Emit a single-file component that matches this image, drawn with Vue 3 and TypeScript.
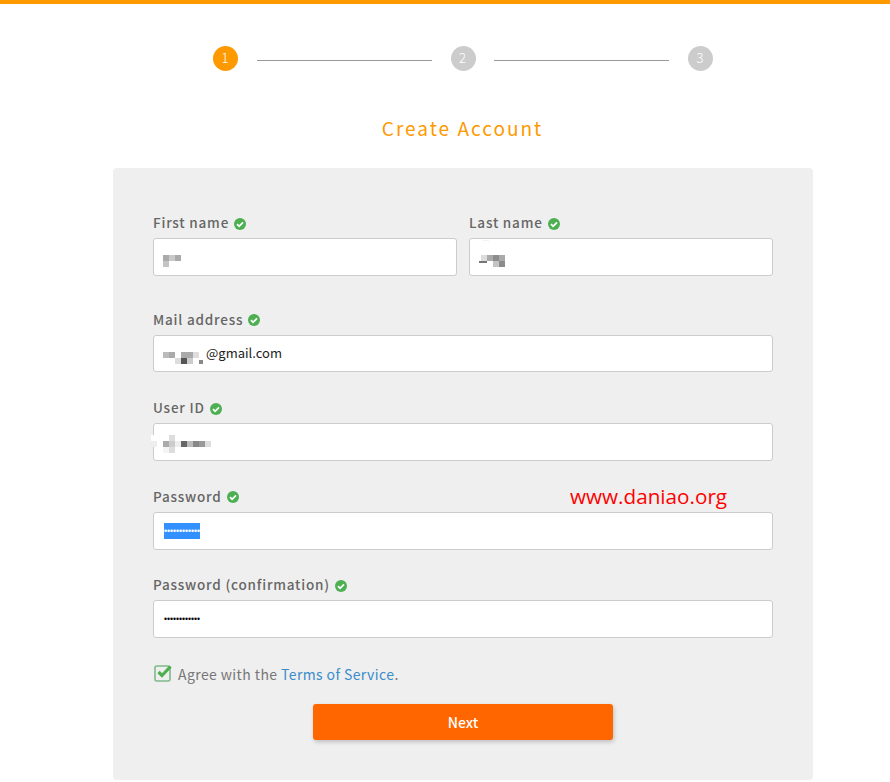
<template>
  <div class="page">
    <div class="top-bar"></div>
    <main class="wrapper">
      <div class="stepper">
        <template v-for="(step, i) in steps" :key="step">
          <span class="step" :class="{ active: i === 0 }">{{ step }}</span>
          <span v-if="i < steps.length - 1" class="step-line"></span>
        </template>
      </div>

      <h1 class="title">Create Account</h1>

      <form class="card" @submit.prevent>
        <span class="watermark">www.daniao.org</span>

        <div class="fields">
          <div v-for="field in fields" :key="field.label" class="field" :class="{ half: field.half }">
            <label class="field-label">
              {{ field.label }}
              <svg class="ok" width="12" height="12" viewBox="0 0 12 12">
                <circle cx="6" cy="6" r="6" fill="#4caf50" />
                <path d="M3 6.2 5.1 8.3 9 4.3" fill="none" stroke="#fff" stroke-width="1.8" />
              </svg>
            </label>
            <div class="input">
              <svg v-if="field.blur" class="blur" :width="field.blurWidth" height="36">
                <rect
                  v-for="(c, n) in field.blur"
                  :key="n"
                  :x="c[0]"
                  :y="c[1]"
                  :width="c[2]"
                  :height="c[3]"
                  :fill="c[4]"
                />
              </svg>
              <span v-if="field.text" class="value">{{ field.text }}</span>
              <span v-if="field.dots" class="dots" :class="{ selected: field.selected }">{{ field.dots }}</span>
            </div>
          </div>
        </div>

        <div class="agree">
          <svg class="checkbox" width="20" height="18" viewBox="0 0 20 18">
            <rect x="1" y="2" width="15" height="15" rx="2" fill="none" stroke="#7fb98a" stroke-width="1.6" />
            <path d="M4.5 8 8 11.5 16.5 2.5" fill="none" stroke="#4caf50" stroke-width="3.2" />
          </svg>
          <span class="agree-text">Agree with the <a class="terms" href="#">Terms of Service</a>.</span>
        </div>

        <button class="next" type="submit">Next</button>
      </form>
    </main>
  </div>
</template>

<script setup lang="ts">
type Cell = [number, number, number, number, string]

interface Field {
  label: string
  half?: boolean
  text?: string
  dots?: string
  selected?: boolean
  blur?: Cell[]
  blurWidth?: number
}

const steps = [1, 2, 3]
const dots = '••••••••••••'

const fields: Field[] = [
  {
    label: 'First name',
    half: true,
    blurWidth: 18,
    blur: [
      [0, 16, 6, 6, '#aaa'],
      [6, 16, 6, 6, '#c8c8c8'],
      [12, 16, 6, 6, '#aaa'],
      [0, 22, 6, 6, '#c4c4c4'],
    ],
  },
  {
    label: 'Last name',
    half: true,
    blurWidth: 26,
    blur: [
      [4, 1, 6, 1, '#f2f2f2'],
      [2, 16, 6, 6, '#dcdcdc'],
      [8, 16, 6, 6, '#aaa'],
      [14, 16, 6, 6, '#8c8c8c'],
      [20, 16, 6, 6, '#aaa'],
      [0, 22, 8, 2, '#777'],
      [14, 22, 6, 6, '#c4c4c4'],
      [20, 22, 6, 6, '#8c8c8c'],
    ],
  },
  {
    label: 'Mail address',
    text: '@gmail.com',
    blurWidth: 43,
    blur: [
      [0, 16, 6, 6, '#bbb'],
      [6, 16, 6, 6, '#aaa'],
      [18, 16, 12, 6, '#aaa'],
      [30, 16, 6, 6, '#ddd'],
      [12, 22, 6, 6, '#ddd'],
      [18, 22, 6, 6, '#555'],
      [24, 22, 6, 6, '#ccc'],
      [36, 24, 4, 4, '#888'],
    ],
  },
  {
    label: 'User ID',
    blurWidth: 48,
    blur: [
      [-12, 11, 6, 12, '#fff'],
      [-12, 17, 6, 6, '#eee'],
      [6, 11, 6, 6, '#ddd'],
      [0, 17, 6, 6, '#aaa'],
      [6, 17, 6, 6, '#ccc'],
      [12, 17, 6, 6, '#eee'],
      [18, 17, 6, 6, '#666'],
      [24, 17, 6, 6, '#bbb'],
      [30, 17, 6, 6, '#888'],
      [36, 17, 6, 6, '#999'],
      [42, 17, 6, 6, '#ddd'],
      [0, 23, 6, 6, '#f4f4f4'],
      [6, 23, 6, 6, '#ddd'],
    ],
  },
  { label: 'Password', dots, selected: true },
  { label: 'Password (confirmation)', dots },
]
</script>

<style scoped>
.page {
  font-family: "Noto Sans CJK JP", "Noto Sans", sans-serif;
  color: #666;
}

.top-bar {
  height: 4px;
  background: #f90;
}

.wrapper {
  width: 700px;
  margin-left: 113px;
}

.stepper {
  display: flex;
  justify-content: space-between;
  align-items: center;
  width: 500px;
  height: 25px;
  margin: 42px auto 0;
}

.step {
  display: flex;
  align-items: center;
  justify-content: center;
  box-sizing: border-box;
  width: 25px;
  height: 25px;
  padding: 0 1px 2px 0;
  border-radius: 50%;
  background: #ccc;
  color: #fff;
  font-size: 13px;
  font-weight: 300;
}

.step.active {
  background: #f90;
}

.step-line {
  width: 175px;
  height: 1px;
  margin-top: 3px;
  background: #999;
}

.title {
  margin: 42px 0 25px;
  padding-right: 1px;
  color: #f90;
  font-size: 19px;
  font-weight: 400;
  line-height: 30px;
  letter-spacing: 2px;
  text-align: center;
}

.card {
  position: relative;
  padding: 48px 40px 40px;
  background: #efefef;
  border-radius: 4px;
}

.watermark {
  position: absolute;
  top: 313px;
  left: 457px;
  color: #f00;
  font-family: "Open Sans", sans-serif;
  font-size: 20.7px;
  line-height: 30px;
}

.fields {
  display: grid;
  grid-template-columns: 1fr 1fr;
  column-gap: 12px;
  row-gap: 28.8px;
}

.field {
  grid-column: span 2;
}

.field.half {
  grid-column: span 1;
  margin-bottom: 8px;
}

.field-label {
  display: flex;
  align-items: center;
  gap: 5px;
  box-sizing: border-box;
  height: 22px;
  padding-bottom: 10px;
  font-size: 13.5px;
  font-weight: 500;
  letter-spacing: 0.8px;
}

.ok {
  flex: none;
  margin-top: 3px;
}

.input {
  display: flex;
  align-items: center;
  box-sizing: border-box;
  height: 37.8px;
  padding: 0 10px 0 9px;
  background: #fff;
  border: 1px solid #ccc;
  border-radius: 3px;
  color: #222;
  font-size: 13px;
}

.value {
  margin-top: -1px;
}

.blur {
  flex: none;
  align-self: flex-start;
  overflow: visible;
}

.dots {
  margin-left: 1px;
  color: #000;
  font-family: "Liberation Sans", sans-serif;
  font-size: 8.6px;
  line-height: 16px;
}

.dots.selected {
  background: #3390ff;
  color: #fff;
}

.agree {
  display: flex;
  align-items: center;
  gap: 5px;
  height: 18px;
  margin-top: 25.4px;
  padding-left: 1px;
  font-size: 14px;
  letter-spacing: 0.4px;
}

.agree-text {
  margin: 2px 0 0 -1px;
  color: #777;
}

.checkbox {
  flex: none;
}

.terms {
  color: #3a8ccb;
  text-decoration: none;
}

.next {
  display: block;
  width: 300px;
  height: 36px;
  margin: 22px auto 0;
  padding: 0;
  background: #f60;
  border: 0;
  border-radius: 3px;
  box-shadow: 1px 2px 4px rgba(0, 0, 0, 0.2);
  color: #fff;
  font-family: inherit;
  font-size: 14px;
  font-weight: 500;
}
</style>
